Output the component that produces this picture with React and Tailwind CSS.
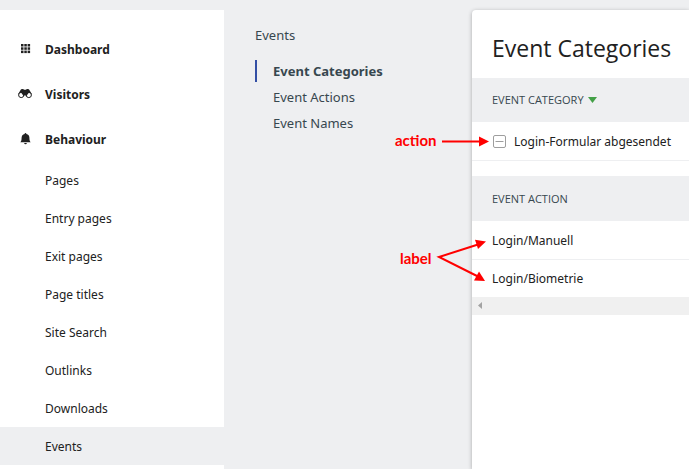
const mainItems = [
  { label: 'Dashboard', icon: GridIcon },
  { label: 'Visitors', icon: BinocularsIcon },
  { label: 'Behaviour', icon: BellIcon },
]

const subItems = [
  'Pages',
  'Entry pages',
  'Exit pages',
  'Page titles',
  'Site Search',
  'Outlinks',
  'Downloads',
  'Events',
]

const reports = ['Event Categories', 'Event Actions', 'Event Names']

const actions = ['Login/Manuell', 'Login/Biometrie']

function GridIcon() {
  return (
    <svg width="14" height="14" viewBox="0 0 14 14" fill="#212121" aria-hidden="true">
      {[2, 5.3, 8.6].map((y) =>
        [3, 6.3, 9.6].map((x) => <rect key={`${x}-${y}`} x={x} y={y} width="2.5" height="2.5" />)
      )}
    </svg>
  )
}

function BinocularsIcon() {
  return (
    <svg width="14" height="14" viewBox="0 0 14 14" aria-hidden="true">
      <path
        d="M2.600 3C3.200 1.800 5.600 1.800 6.200 2.800h1.600c.6-1 3-1 3.600.2L13.800 7 10 9.500 8.600 8.200H5.400L4 9.500.2 7z"
        fill="#212121"
      />
      <circle cx="3.2" cy="8" r="2.6" fill="#fff" stroke="#212121" strokeWidth="1" />
      <circle cx="10.8" cy="8" r="2.6" fill="#fff" stroke="#212121" strokeWidth="1" />
      <path d="M2.600 5a3 3 0 0 1 3.400 4.600zM11.400 5a3 3 0 0 0-3.400 4.600z" fill="#212121" />
    </svg>
  )
}

function BellIcon() {
  return (
    <svg width="14" height="14" viewBox="0 0 14 14" fill="#212121" aria-hidden="true">
      <path d="M7.500 1c.6 0 .9.4.9.9 2 .5 3 1.900 3 3.800 0 2.400.3 3.200 1.300 4.600H2.300c1-1.400 1.300-2.200 1.300-4.600 0-1.900 1-3.300 3-3.800 0-.5.3-.9.9-.9z" />
      <path d="M6.200 11h2.600a1.300 1.300 0 0 1-2.600 0z" />
    </svg>
  )
}

function Sidebar() {
  return (
    <nav className="w-56 shrink-0 bg-white pt-4 text-[12px] text-[#212121]">
      {mainItems.map(({ label, icon: Icon }) => (
        <a key={label} href="#" className="flex h-[45px] items-center pl-[18px] font-bold">
          <Icon />
          <span className="ml-[13px] pt-0.5">{label}</span>
        </a>
      ))}
      {subItems.map((label) => (
        <a
          key={label}
          href="#"
          className={`flex h-[38px] items-center pt-px pl-[45px] ${label === 'Events' ? 'bg-[#eeeff1]' : ''}`}
        >
          {label}
        </a>
      ))}
    </nav>
  )
}

function ReportMenu() {
  return (
    <nav className="w-62 shrink-0 pt-[14px] pl-[31px] text-[13px] text-[#37474f]">
      <h2 className="leading-[22px]">Events</h2>
      <ul className="mt-[14px] flex flex-col gap-1">
        {reports.map((label, i) => (
          <li
            key={label}
            className={`border-l-2 pl-4 leading-[22px] ${i === 0 ? 'border-[#334fa5] font-bold' : 'border-transparent'}`}
          >
            <a href="#">{label}</a>
          </li>
        ))}
      </ul>
    </nav>
  )
}

function EventReport() {
  return (
    <main className="min-w-0 flex-1 rounded-tl-sm bg-white text-[#212121] shadow-[0_1px_4px_rgba(0,0,0,0.3)]">
      <h1 className="flex h-[68px] items-center pt-2 pl-5 font-['Open_Sans',sans-serif] text-[23px] whitespace-nowrap">
        Event Categories
      </h1>
      <table className="w-full text-left text-[12px]">
        <thead>
          <tr className="h-11 bg-[#eeeff1] font-['Open_Sans',sans-serif] text-[11px] text-[#37474f]">
            <th className="pl-5 font-normal">
              <button type="button" className="flex items-center gap-1 uppercase">
                Event Category
                <svg width="9" height="6" viewBox="0 0 9 6" fill="#43a047" aria-hidden="true">
                  <path d="M0 0h9L4.500 6z" />
                </svg>
              </button>
            </th>
          </tr>
        </thead>
        <tbody>
          <tr className="h-[38px] border-b border-[#eeeff1]">
            <td className="pl-5">
              <div className="flex items-center gap-2 whitespace-nowrap">
                <button type="button" aria-label="Collapse">
                  <svg width="14" height="14" viewBox="0 0 14 14" fill="none" stroke="#9e9e9e" aria-hidden="true">
                    <rect x="1.5" y="1.5" width="12" height="12" rx="1.5" />
                    <path d="M3.5 7.5h8" />
                  </svg>
                </button>
                <span className="pt-0.5">Login-Formular abgesendet</span>
              </div>
            </td>
          </tr>
        </tbody>
      </table>
      <table className="mt-[15px] w-full text-left text-[12px]">
        <thead>
          <tr className="h-[45px] bg-[#eeeff1] font-['Open_Sans',sans-serif] text-[11px] text-[#37474f] uppercase">
            <th className="pt-0.5 pl-5 font-normal">Event Action</th>
          </tr>
        </thead>
        <tbody>
          {actions.map((label) => (
            <tr key={label} className="h-[39px] border-b border-[#eeeff1] last:h-[37px] last:border-b-0">
              <td className="pt-0.5 pl-5">{label}</td>
            </tr>
          ))}
        </tbody>
      </table>
      <div className="flex h-[18px] items-center bg-[#f0f0f0] pl-[6px]">
        <button type="button" aria-label="Scroll left">
          <svg width="4" height="7" viewBox="0 0 4 7" fill="#a3a3a3" aria-hidden="true">
            <path d="M4 0v7L0 3.500z" />
          </svg>
        </button>
      </div>
    </main>
  )
}

// Red callouts lying over the report
function Annotations() {
  return (
    <div className="pointer-events-none absolute inset-0 font-['Lato',sans-serif] text-[15px] leading-5 font-bold text-[#ff0000]">
      <span className="absolute top-[130px] left-[395px]">action</span>
      <span className="absolute top-[248px] left-[400px]">label</span>
      <svg className="absolute top-[130px] left-[436px]" width="56" height="160" viewBox="436 130 56 160" aria-hidden="true">
        <g stroke="#ff0000" strokeWidth="2" fill="none">
          <path d="M442 141.500H481" />
          <path d="M478 244.500 439 257l39 19.500" />
        </g>
        <g fill="#ff0000">
          <path d="M489 141.500 479 136.500v10z" />
          <path d="M486 241.500 475 239.800l3 9.200z" />
          <path d="M485 281 479 271.500 474 280.500z" />
        </g>
      </svg>
    </div>
  )
}

export default function App() {
  return (
    <div className="relative flex min-h-screen overflow-hidden bg-[#eeeff1] pt-[10px] font-['Noto_Sans',sans-serif]">
      <Sidebar />
      <ReportMenu />
      <EventReport />
      <Annotations />
    </div>
  )
}
